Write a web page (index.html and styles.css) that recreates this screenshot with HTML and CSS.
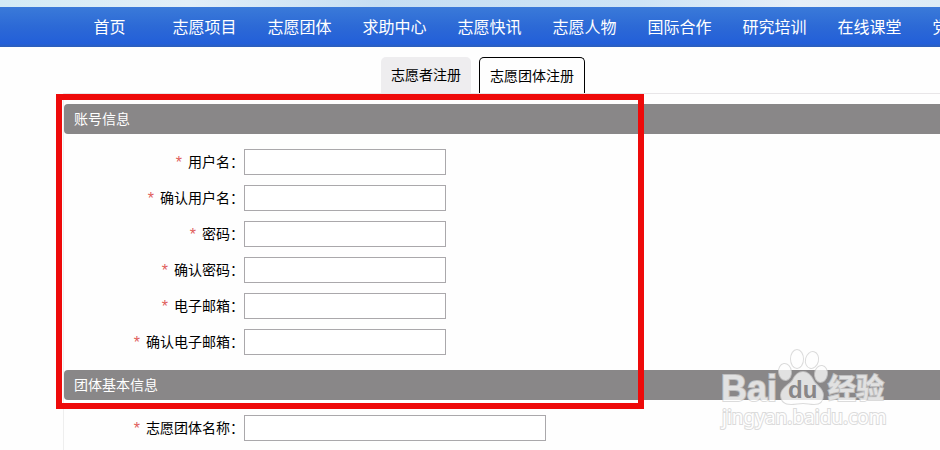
FILE: index.html
```
<!DOCTYPE html>
<html lang="zh-CN">
<head>
    <meta charset="UTF-8">
    <meta name="viewport" content="width=device-width, initial-scale=1.0">
    <title>志愿团体注册</title>
    <link rel="stylesheet" href="styles.css">
</head>
<body>
    <div class="banner"></div>
    <nav class="nav">
        <a href="#">首页</a>
        <a href="#">志愿项目</a>
        <a href="#">志愿团体</a>
        <a href="#">求助中心</a>
        <a href="#">志愿快讯</a>
        <a href="#">志愿人物</a>
        <a href="#">国际合作</a>
        <a href="#">研究培训</a>
        <a href="#">在线课堂</a>
        <a href="#">党建工作</a>
    </nav>

    <main class="register">
        <div class="tabs">
            <button type="button" class="tab">志愿者注册</button>
            <button type="button" class="tab active">志愿团体注册</button>
        </div>
        <form class="panel">
            <h2>账号信息</h2>
            <div class="fields">
                <div class="row">
                    <label for="username"><span class="required">*</span>用户名：</label>
                    <input type="text" id="username">
                </div>
                <div class="row">
                    <label for="username2"><span class="required">*</span>确认用户名：</label>
                    <input type="text" id="username2">
                </div>
                <div class="row">
                    <label for="password"><span class="required">*</span>密码：</label>
                    <input type="password" id="password">
                </div>
                <div class="row">
                    <label for="password2"><span class="required">*</span>确认密码：</label>
                    <input type="password" id="password2">
                </div>
                <div class="row">
                    <label for="email"><span class="required">*</span>电子邮箱：</label>
                    <input type="email" id="email">
                </div>
                <div class="row">
                    <label for="email2"><span class="required">*</span>确认电子邮箱：</label>
                    <input type="email" id="email2">
                </div>
            </div>
            <h2>团体基本信息</h2>
            <div class="fields">
                <div class="row">
                    <label for="team"><span class="required">*</span>志愿团体名称：</label>
                    <input type="text" id="team" class="wide">
                </div>
            </div>
        </form>
        <div class="highlight"></div>
    </main>

    <svg class="watermark" width="180" height="90" viewBox="0 0 180 90">
        <g class="mark">
            <text class="bai" x="2" y="53">Bai</text>
            <ellipse cx="66" cy="24" rx="6" ry="8" transform="rotate(-8 66 24)"/>
            <ellipse cx="78" cy="11" rx="6" ry="9"/>
            <ellipse cx="93" cy="12" rx="6" ry="8" transform="rotate(14 93 12)"/>
            <ellipse cx="102" cy="26" rx="6" ry="8" transform="rotate(8 102 26)"/>
            <path d="M84 24c-5 0-8 4-10 8-3 5-12 8-12 15 0 6 4 9 10 9 4 0 8-1 12-1s7 1 11 1c6 0 9-3 9-9 0-7-8-10-10-15-2-4-5-8-10-8z"/>
            <text class="jingyan" x="109" y="51">经验</text>
            <text class="site" x="3" y="76">jingyan.baidu.com</text>
        </g>
        <text class="du" x="69" y="50">du</text>
    </svg>
</body>
</html>
```
FILE: styles.css
```
body {
    margin: 0;
    position: relative;
    min-height: 100vh;
    overflow: hidden;
    background-color: #fefefe;
    color: #000000;
    font-family: "Liberation Sans", "Noto Sans CJK SC", sans-serif;
    font-size: 14px;
}
.banner {
    height: 7px;
    background: linear-gradient(to right, #d3ebf5, #e2eff8 20%, #c6dff3 40%, #cde4f6 68%, #e6eff8 85%, #dcecf6);
}
.nav {
    display: flex;
    height: 40px;
    padding-left: 62px;
    box-sizing: border-box;
    overflow: hidden;
    background: linear-gradient(to bottom, #3a7ad9, #2c69d6 50%, #235fd9 92%, #2d5fb8);
}
.nav a {
    flex: 0 0 95px;
    color: #ffffff;
    font-size: 16px;
    line-height: 42px;
    text-align: center;
    text-decoration: none;
}
.register {
    position: relative;
    margin: 10px 0 0 63px;
}
.tabs {
    display: flex;
    gap: 8px;
    height: 36px;
    padding-left: 318px;
}
.tab {
    padding: 0 10px 2px;
    border: 0;
    border-radius: 5px 5px 0 0;
    background-color: #eeedef;
    color: #000000;
    font: inherit;
    cursor: pointer;
}
.tab.active {
    border: 1px solid #000000;
    border-bottom: 0;
    background-color: #fefefe;
}
.panel {
    border-top: 1px solid #e8e6e8;
    border-left: 1px solid #eeeeee;
    padding-top: 10px;
}
.panel h2 {
    margin: 0;
    padding-left: 10px;
    border-radius: 4px 0 0 4px;
    background-color: #898788;
    color: #ffffff;
    font-size: 14px;
    font-weight: normal;
    line-height: 30px;
}
.fields {
    display: flex;
    flex-direction: column;
    gap: 10px;
    padding: 15px 0;
}
.row {
    display: flex;
    align-items: center;
}
.row label {
    width: 180px;
    line-height: 26px;
    text-align: right;
}
.row input {
    width: 202px;
    height: 26px;
    box-sizing: border-box;
    border: 1px solid #aaa8ab;
    background-color: #ffffff;
    font: inherit;
}
.row input.wide {
    width: 302px;
}
.required {
    margin-right: 6px;
    color: #e0605c;
    font-size: 16px;
    line-height: 16px;
    vertical-align: -1px;
}
.highlight {
    position: absolute;
    top: 37px;
    left: -7px;
    width: 588px;
    height: 315px;
    box-sizing: border-box;
    border: 6px solid #ee0a0a;
    pointer-events: none;
}
.watermark {
    position: absolute;
    top: 348px;
    right: 41px;
    pointer-events: none;
}
.mark {
    fill: #ffffff;
    stroke: #d0d0d0;
    stroke-width: 2px;
    paint-order: stroke;
    opacity: 0.75;
}
.bai {
    font-size: 36px;
    font-weight: bold;
}
.jingyan {
    font-size: 28px;
    font-weight: bold;
}
.site {
    font-family: "Noto Sans", sans-serif;
    font-size: 19px;
}
.du {
    fill: #898788;
    font-size: 24px;
    font-weight: bold;
}
```
